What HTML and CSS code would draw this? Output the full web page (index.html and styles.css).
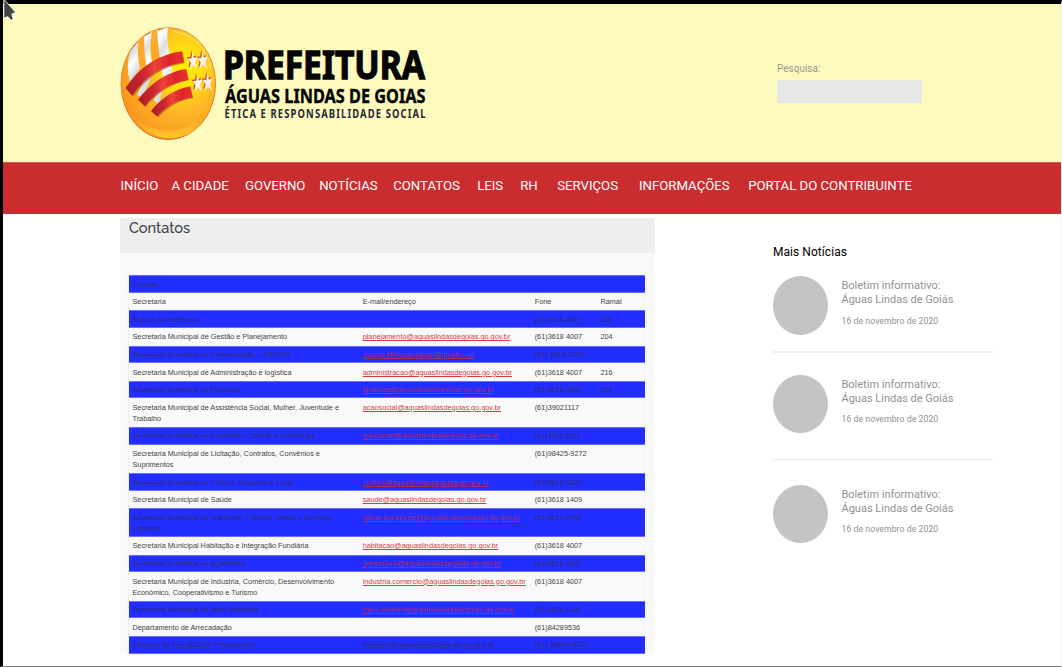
FILE: index.html
```html
<!DOCTYPE html>
<html lang="pt-BR">
<head>
<meta charset="utf-8">
<title>Prefeitura Águas Lindas de Goiás</title>
<link rel="stylesheet" href="styles.css">
</head>
<body>
<div class="page">
  <header class="header">
    <svg class="logo" width="310" height="116" viewBox="118 26 310 116">
      <defs>
        <radialGradient id="gold" cx=".66" cy=".36" r=".7"><stop offset="0" stop-color="#fff200"/><stop offset=".25" stop-color="#ffe010"/><stop offset=".55" stop-color="#fdb827"/><stop offset="1" stop-color="#f9961e"/></radialGradient>
        <linearGradient id="rim" x2="0" y2="1"><stop offset="0" stop-color="#e8953a"/><stop offset="1" stop-color="#d9641f"/></linearGradient>
        <linearGradient id="red"><stop offset="0" stop-color="#a81e26"/><stop offset=".3" stop-color="#ca2530"/><stop offset=".5" stop-color="#ee4038"/><stop offset=".75" stop-color="#dc262b"/><stop offset="1" stop-color="#ee2e31"/></linearGradient>
        <linearGradient id="silver" x2=".35" y2="1"><stop offset="0" stop-color="#d3d5d8"/><stop offset=".2" stop-color="#fff"/><stop offset=".4" stop-color="#dcdfe2"/><stop offset=".6" stop-color="#fff"/><stop offset="1" stop-color="#cfd1d5"/></linearGradient>
        <linearGradient id="glow" x2="0" y2="1"><stop offset=".6" stop-color="#ffc72e" stop-opacity="0"/><stop offset="1" stop-color="#ffc72e"/></linearGradient>
        <clipPath id="ball"><ellipse cx="168.3" cy="83.6" rx="47" ry="55.6"/></clipPath>
        <path id="star" d="M-.5-9 1-3 4.800-4 2.300 1.500 4.200 8 .2 4.300-3.300 8.500-2.300 1.800-5-2.500-1.600-2.500Z"/>
      </defs>
      <ellipse cx="168.3" cy="83.6" rx="47.3" ry="56" fill="url(#gold)" stroke="url(#rim)" stroke-width=".9"/>
      <path d="M123 91Q131 128 167 131 201 130 213 96 204 139 168 138 132 135 123 91Z" fill="url(#glow)"/>
      <path d="M173 31Q204 36 211 69" fill="none" stroke="#ffd85a" stroke-width="1.4"/>
      <g clip-path="url(#ball)">
        <path d="M130 48 140 38Q137 58 137 70L128 82Q127 63 130 48ZM143 36 155 29Q150 54 151 68L138 74Q136 55 143 36ZM157 29 163 28Q157 44 162 61L152 65Q151 48 157 29Z" fill="#fba928"/>
        <g fill="url(#silver)">
          <path d="M131 50 139 39Q136 53 140 68L130 82Q125 64 131 50Z"/>
          <path d="M144 36 152 31Q148 55 154 69 149 82 143 98L137 95Q145 79 147 70 144 55 144 36Z"/>
          <path d="M157 30 168 27Q166 42 171 59L173 75Q160 87 160 104L154 101Q156 89 163 77 158 50 157 30Z"/>
        </g>
        <path d="M130 51 138 41M144 36 151 32M158 30 164 28" stroke="#cf6423" stroke-width="1.2" fill="none"/>
      </g>
      <g transform="translate(.8 1.3)" fill="#8b4b12" opacity=".5">
        <path d="M125.5 87Q145 56 182 51L184 62Q153 66 132.5 95.5Z"/><path d="M138 98.5Q157 73 186 68.5L188 79Q162 84 145 106Z"/><path d="M151 110Q166 91 190 86L192.500 97Q172 100 157.5 116Z"/>
      </g>
      <g fill="url(#red)">
        <path d="M125.500 88Q147 56 182 51.300L184 62.500Q153 66 132 95.500Z"/>
        <path d="M138 99.500Q159 73 186 69L188.300 80Q163 84 144.500 106.200Z"/>
        <path d="M151 111Q167 91 190 86.300L192.500 97.500Q172 100 157 116.500Z"/>
      </g>
      <g fill="#d7562c"><use href="#star" x="191.700" y="59.500"/><use href="#star" x="201.700" y="59"/><use href="#star" x="196.500" y="82"/><use href="#star" x="206.600" y="81"/></g>
      <g fill="#f4f1ef"><use href="#star" x="193" y="61"/><use href="#star" x="202.900" y="60.500"/><use href="#star" x="197.800" y="83.500"/><use href="#star" x="207.800" y="82.500"/></g>
      <g class="logo-text">
        <text class="logo-name" x="223" y="79.200" textLength="202" lengthAdjust="spacingAndGlyphs">PREFEITURA</text>
        <text class="logo-city" x="225" y="103.200" textLength="200.500" lengthAdjust="spacingAndGlyphs">ÁGUAS LINDAS DE GOIAS</text>
        <text class="logo-motto" transform="translate(224.500 118) scale(.82 1)" textLength="245" lengthAdjust="spacing">ÉTICA E RESPONSABILIDADE SOCIAL</text>
      </g>
    </svg>
    <label class="search">Pesquisa:<input class="search-input" type="text"></label>
  </header>
  <nav class="nav"><a>INÍCIO</a><a>A CIDADE</a><a>GOVERNO</a><a>NOTÍCIAS</a><a>CONTATOS</a><a>LEIS</a><a>RH</a><a>SERVIÇOS</a><a>INFORMAÇÕES</a><a>PORTAL DO CONTRIBUINTE</a></nav>
  <main class="content">
    <section class="panel">
      <h1 class="panel-title">Contatos</h1>
      <div class="table">
        <div class="row"><span>Contato</span></div>
        <div class="row"><span>Secretaria</span><span>E-mail/endereço</span><span>Fone</span><span>Ramal</span></div>
        <div class="row"><span>Recepção Prefeitura</span><span></span><span>(61)3618 4007</span><span>200</span></div>
        <div class="row"><span>Secretaria Municipal de Gestão e Planejamento</span><a>planejamento@aguaslindasdegoias.go.gov.br</a><span>(61)3618 4007</span><span>204</span></div>
        <div class="row"><span>Secretaria Municipal de Comunicação – ASCOM</span><a>ascom.hildocandango@gmail.com</a><span>(61) 3618-1293</span></div>
        <div class="row"><span>Secretaria Municipal de Administração e logística</span><a>administracao@aguaslindasdegoias.go.gov.br</a><span>(61)3618 4007</span><span>216</span></div>
        <div class="row"><span>Secretaria Municipal de Finanças</span><a>financas@aguaslindasdegoias.go.gov.br</a><span>(61)3618 4007</span><span>201</span></div>
        <div class="row"><span>Secretaria Municipal de Assistência Social, Mulher, Juventude e<br>Trabalho</span><a>acaosocial@aguaslindasdegoias.go.gov.br</a><span>(61)39021117</span></div>
        <div class="row"><span>Secretaria Municipal de Educação, Ciência e Tecnologia</span><a>educacao@aguaslindasdegoias.go.gov.br</a><span>(61)3902 1111</span></div>
        <div class="row"><span>Secretaria Municipal de Licitação, Contratos, Convênios e<br>Suprimentos</span><span></span><span>(61)98425-9272</span></div>
        <div class="row"><span>Secretaria Municipal de Cultura, Desporto e Lazer</span><a>cultura@aguaslindasdegoias.go.gov.br</a><span>(61)3618 4007</span></div>
        <div class="row"><span>Secretaria Municipal de Saúde</span><a>saude@aguaslindasdegoias.go.gov.br</a><span>(61)3618 1409</span></div>
        <div class="row"><span>Secretaria Municipal de Tranporte, Trânsito, Obras e Serviços<br>Urbanos</span><a>obras.transporte@aguaslindasdegoias.go.gov.br</a><span>(61)3613 9458</span></div>
        <div class="row"><span>Secretaria Municipal Habitação e Integração Fundiária</span><a>habitacao@aguaslindasdegoias.go.gov.br</a><span>(61)3618 4007</span></div>
        <div class="row"><span>Secretaria Municipal de Agricultura</span><a>agricultura@aguaslindasdegoias.go.gov.br</a><span>(61)3618 4007</span></div>
        <div class="row"><span>Secretaria Municipal de Industria, Comércio, Desenvolvimento<br>Econômico, Cooperativismo e Turismo</span><a>industria.comercio@aguaslindasdegoias.go.gov.br</a><span>(61)3618 4007</span></div>
        <div class="row"><span>Secretaria Municipal de Meio Ambiente</span><a>meio.ambiente@aguaslindasdegoias.go.gov.br</a><span>(61)3616 1140</span></div>
        <div class="row"><span>Departamento de Arrecadação</span><span></span><span>(61)84289536</span></div>
        <div class="row"><span>Diretoria de Fiscalização Tributária/td&gt;</span><span>tributaria@aguaslindasdegoias.go.gov.br</span><span>(61) 98609-8370</span></div>
      </div>
    </section>
    <aside class="news">
      <h2 class="news-heading">Mais Notícias</h2>
      <article class="news-item"><div class="thumb"></div><div><p class="news-title">Boletim informativo:<br>Águas Lindas de Goiás</p><time class="news-date">16 de novembro de 2020</time></div></article>
      <article class="news-item"><div class="thumb"></div><div><p class="news-title">Boletim informativo:<br>Águas Lindas de Goiás</p><time class="news-date">16 de novembro de 2020</time></div></article>
      <article class="news-item"><div class="thumb"></div><div><p class="news-title">Boletim informativo:<br>Águas Lindas de Goiás</p><time class="news-date">16 de novembro de 2020</time></div></article>
    </aside>
  </main>
</div>
<svg class="cursor" width="18" height="24" viewBox="0 0 18 24"><path d="M3.800-.8 15.800 12.400 11.800 14 13.200 19 11 20.600 8 16.700 3.800 18.200Z" fill="#454545" stroke="#fff" stroke-width=".9"/></svg>
</body>
</html>
```
FILE: styles.css
```css
* { box-sizing: border-box; }
body { margin: 0; font-family: Roboto, "Liberation Sans", sans-serif; background: #fff; }
.page {
  height: 667px;
  overflow: hidden;
  border-top: 4px solid #000;
  border-left: 3px solid #000;
  border-right: 1px solid #f2f2f2;
  border-bottom: 1px solid #7d7d7d;
}
.header {
  height: 158px;
  padding: 22px 0 0 115px;
  display: flex;
  background: #fdfabe;
}
.logo { flex: none; overflow: visible; }
.logo-text { font-family: "Noto Sans", "Open Sans", sans-serif; fill: #050505; }
.logo-name { font-size: 39.500px; font-weight: 700; stroke: #050505; stroke-width: 1.300px; }
.logo-city { font-size: 18.800px; font-weight: 700; stroke: #050505; stroke-width: .4px; }
.logo-motto { font-size: 11.500px; font-weight: 700; fill: #29293a; }
.search {
  margin: 36px 0 0 349px;
  display: flex;
  flex-direction: column;
  gap: 5px;
  font-size: 10px;
  line-height: 13px;
  color: #999a91;
}
.search-input { width: 145px; height: 23px; border: 0; padding: 0 6px; background: #e7e7e7; }
.nav {
  height: 52px;
  padding-left: 117.500px;
  display: grid;
  grid-template-columns: 51px 73.500px 74.200px 74px 84px 43px 37px 81.800px 109.200px auto;
  align-items: center;
  padding-bottom: 7px;
  background: #c92d30;
  border-top: 1px solid #d35b4c;
  color: #fff;
  font-size: 13.200px;
  white-space: nowrap;
}
.content { display: flex; padding: 4px 0 0 117.400px; }
.panel { width: 534.600px; height: 436.700px; background: #f9f9f9; }
.panel-title {
  margin: 0 0 22.300px;
  height: 35px;
  padding: 0 0 0 8.500px;
  background: #eee;
  border-radius: 1px 1px 0 0;
  font: 500 14.600px/20px Raleway, Montserrat, Lato, sans-serif;
  color: #3b3f45;
}
.table {
  margin: 0 9.500px 0 8px;
  font: 7.310px/11px "Liberation Sans", Arial, sans-serif;
  color: #444;
  border-left: 1px solid #f0f0f0;
  border-right: 1px solid #f3f3f3;
}
.row {
  display: grid;
  grid-template-columns: 230.200px 172px 65.800px auto;
  align-items: start;
  margin: 0 -.5px;
  padding: 3.300px 0 3.300px 3.600px;
  white-space: nowrap;
}
.row:nth-child(odd) {
  background: #222eff;
  color: #2c2c6c;
  box-shadow: inset 0 .5px #aab0ff, inset 0 -.5px #aab0ff;
}
.row a { color: #d93b40; text-decoration: underline; text-decoration-thickness: .6px; }
.row:nth-child(odd) a { color: #a02b70; }
.news { padding: 25px 0 0 118px; width: 338.500px; }
.news-heading { margin: 0; padding-top: 1px; font-size: 12px; line-height: 16px; font-weight: 400; letter-spacing: .05px; color: #000; }
.news-item { display: flex; gap: 13.500px; }
.news-item:nth-of-type(1) { padding: 16px 0; border-bottom: 2px solid #ededed; height: 93px; }
.news-item:nth-of-type(2) { padding-top: 21.500px; border-bottom: 1.500px solid #e5e5e5; height: 106.500px; }
.news-item:nth-of-type(3) { padding-top: 25px; }
.thumb { flex: none; width: 55px; height: 58.500px; border-radius: 50%; background: #c4c4c4; }
.news-title { margin: 3px 0 0; font-size: 11px; line-height: 14.300px; color: #929292; }
.news-date { display: block; margin-top: 7px; font-size: 8.700px; line-height: 12px; letter-spacing: .05px; color: #929292; }
.cursor { position: absolute; left: 0; top: 0; }
```
